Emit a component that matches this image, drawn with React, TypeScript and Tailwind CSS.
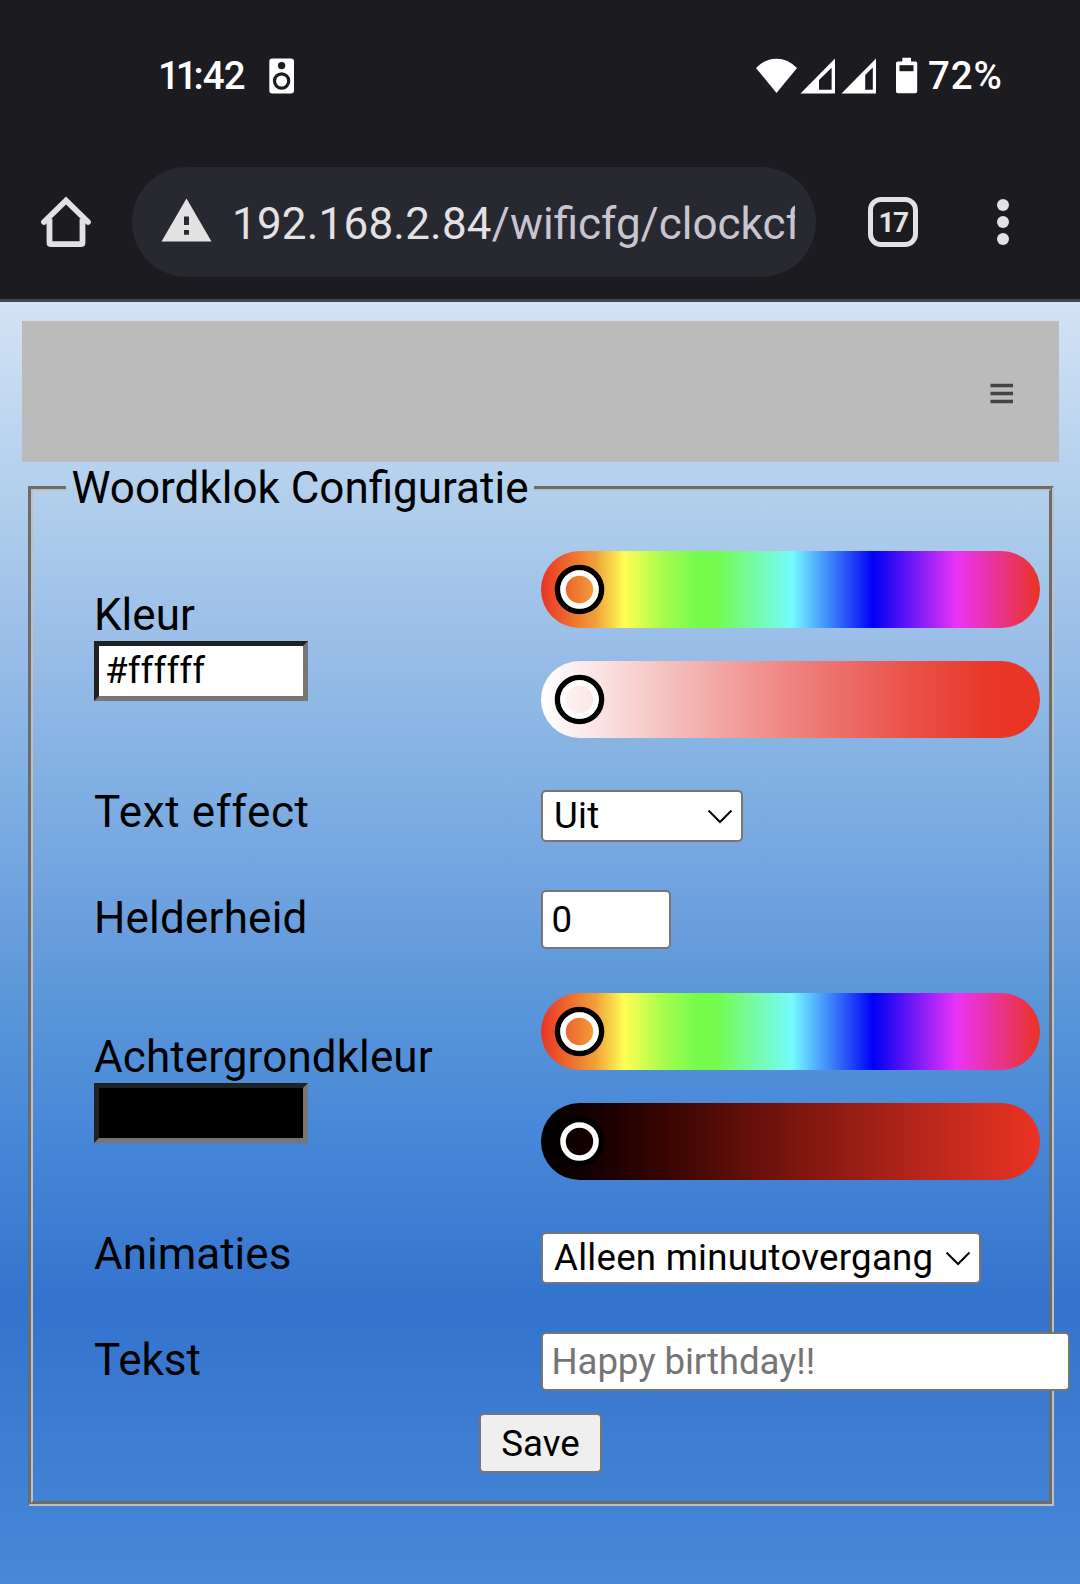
import React from "react";

const HUE =
  "bg-[linear-gradient(90deg,#ea3323_0%,#f0a13a_11%,#ffff54_16.7%,#a6fc4d_24.5%,#75fb4c_31.5%,#75fb4c_35%,#75fbfd_50.3%,#0000f5_66.6%,#ea33f7_83.3%,#ea3323_100%)]";
const WHITE_RED =
  "bg-[linear-gradient(90deg,#ffffff_0%,#f9e0df_13%,#f4bfbd_26%,#ee8480_50%,#ea5149_74%,#e93729_90%,#ea3323_100%)]";
const BLACK_RED =
  "bg-[linear-gradient(90deg,#000000_0%,#140000_10%,#380502_25%,#79150d_50%,#b4251a_75%,#ea3323_100%)]";

function StatusBar() {
  return (
    <div className="flex h-[150px] items-center pt-px text-white">
      <div className="ml-[158px] flex w-[90px] text-[38.5px] leading-[46px] font-medium">
        <span className="tracking-[-4.2px]">11</span>
        <span className="tracking-[-0.8px]">:42</span>
      </div>
      <svg className="ml-[21px]" width="26" height="36" viewBox="0 0 26 36">
        <rect x="0.3" y="0.5" width="24.7" height="35" rx="3" fill="#fff" />
        <circle cx="12.6" cy="7.6" r="3.7" fill="#1c1b1f" />
        <circle cx="12.6" cy="23" r="7.1" fill="none" stroke="#1c1b1f" strokeWidth="3.2" />
      </svg>
      <svg className="ml-[460px]" width="165" height="38" viewBox="755 56.5 165 38">
        <path d="M756 67.5Q765 58.2 776.5 58.2T797 67.5L776.5 92.5Z" fill="#fff" />
        <path d="M800.5 93L835 58V93Z" fill="#fff" />
        <path d="M819 79.5L831.6 67.200V89.2H819Z" fill="#1c1b1f" />
        <path d="M841.5 93L876 58V93Z" fill="#fff" />
        <path d="M865.2 74.5L872.8 67V89.2H865.2Z" fill="#1c1b1f" />
        <path
          d="M902.3 57.2H911V61H915.5Q917.2 61 917.2 62.7V91Q917.2 92.8 915.5 92.8H897.8Q896 92.8 896 91V62.7Q896 61 897.8 61H902.3Z"
          fill="#fff"
        />
        <rect x="899.5" y="64.7" width="14" height="6" fill="#1c1b1f" />
      </svg>
      <span className="ml-[8px] text-[38.5px] leading-[46px] font-medium tracking-[0.9px]">72%</span>
    </div>
  );
}

function AddressBar() {
  return (
    <div className="flex h-[149px] items-start pt-[17px]">
      <svg className="mt-[29px] ml-[40px]" width="52" height="53" viewBox="40 196 52 53" fill="none" stroke="#e3e2e2" strokeWidth="5.8">
        <path d="M44 222L66 200.500L88 222" strokeLinecap="round" />
        <path d="M49.5 219V242.5Q49.5 244.2 51.2 244.2H80.8Q82.5 244.2 82.5 242.5V219" />
      </svg>
      <div className="ml-[40px] flex h-[110px] w-[684px] items-center rounded-full bg-[#282830] pl-[29px]">
        <svg width="51" height="44" viewBox="0 0 51 44" className="mb-[4px]">
          <path d="M25.5 0.5L50.5 43.5H0.5Z" fill="#e3e2e2" />
          <path d="M23 18.5h5v8.5h-5zM23 32h5v4.700h-5z" fill="#282830" />
        </svg>
        <div className="ml-[20px] w-[563px] overflow-hidden pt-[3px] text-[44px] leading-[56px] whitespace-nowrap text-[#c8c5d0]">
          <span className="tracking-[0.2px] text-[#e4e1e6]">192.168.2.84</span>/wificfg/clockcfg
        </div>
      </div>
      <div className="mt-[30px] ml-[52px] flex size-[50px] items-center justify-center rounded-[13px] border-[5.5px] border-[#e3e2e2] pt-px text-[28px] leading-none font-bold tracking-[-1.5px] text-[#e3e2e2]">
        17
      </div>
      <div className="mt-[32px] ml-[79px] flex flex-col gap-[5.500px]">
        <i className="size-[11.500px] rounded-full bg-[#e3e2e2]" />
        <i className="size-[11.500px] rounded-full bg-[#e3e2e2]" />
        <i className="size-[11.500px] rounded-full bg-[#e3e2e2]" />
      </div>
    </div>
  );
}

function Slider({ fill }: { fill: string }) {
  return (
    <div className={`flex h-[77px] w-[499px] items-start rounded-full pt-[13px] pl-[13px] ${fill}`}>
      <svg width="51" height="51" viewBox="0 0 51 51" fill="none" strokeWidth="5.600">
        <circle cx="25.500" cy="25.500" r="22" stroke="#000" />
        <circle cx="25.500" cy="25.500" r="16.500" stroke="#fff" />
      </svg>
    </div>
  );
}

function Select({ value, width }: { value: string; width: string }) {
  return (
    <div className={`relative h-[52px] ${width}`}>
      <select className="block size-full appearance-none rounded-[5px] border-2 border-[#767676] bg-white pb-px pl-[11px] text-[36.670px] leading-[47px] tracking-[0.24px] text-black">
        <option>{value}</option>
      </select>
      <svg className="absolute top-[19px] right-[10px]" width="26" height="15" viewBox="0 0 26 15" fill="none" stroke="#000" strokeWidth="2">
        <path d="M1.500 1.500L13 13L24.500 1.500" />
      </svg>
    </div>
  );
}

function Row({ label, swatch, height, pad, tracking = "tracking-[0.1px]", children }: { label: string; swatch?: React.ReactNode; height: string; pad: string; tracking?: string; children: React.ReactNode }) {
  return (
    <div className={`flex items-start ${height}`}>
      <div className={`w-[447px] shrink-0 ${swatch ? "pt-[49px]" : "pt-[26px]"}`}>
        <div className={`h-[52px] leading-[52px] ${tracking}`}>{label}</div>
        {swatch}
      </div>
      <div className={`shrink-0 ${pad}`}>{children}</div>
    </div>
  );
}

const SWATCH =
  "block h-[60px] w-[214px] border-5 border-t-[#202122] border-r-[#767676] border-b-[#767676] border-l-[#202122] px-[6px] pb-px text-[36.670px] leading-[47px] tracking-[0.15px]";
const FIELD =
  "block h-[59px] rounded-[5px] border-2 border-[#767676] bg-white px-[8.500px] text-[36.670px] leading-[54px] tracking-[-0.1px] text-black placeholder:text-[#757575] placeholder:opacity-100";

export default function App() {
  return (
    <div className="flex h-[1584px] w-[1080px] flex-col overflow-hidden bg-[#1c1b1f] font-[Roboto,sans-serif]">
      <StatusBar />
      <AddressBar />
      <div className="h-[3px] bg-[#48474c]" />
      <main className="h-[1282px] bg-[linear-gradient(180deg,#d4e3f5_0px,#cfe0f4_25px,#b7d2ee_160px,#afceec_210px,#9cbfe8_330px,#84b2e3_460px,#6b9fde_616px,#5b97d9_690px,#4787d8_835px,#3473cd_1003px,#4888d8_1282px)] pt-[19px] text-[44px] text-black">
        <nav className="mr-[21px] ml-[22px] flex h-[141px] items-center justify-end bg-[#bbbbbb] pr-[45px]">
          <svg width="24" height="22" viewBox="0 0 24 22" className="mt-[4px]">
            <path d="M0.500 2.500H23M0.500 10.500H23M0.500 18.500H23" stroke="#444" strokeWidth="3.500" />
          </svg>
        </nav>
        <fieldset className="ml-[28px] h-[1044px] w-[1025.500px] min-w-0 border-5 border-[#c0c0c0] pt-[26px] pl-[33px] [border-style:groove]">
          <legend className="h-[52px] w-[468px] pl-[5.500px] leading-[52px] whitespace-nowrap">Woordklok Configuratie</legend>
          <div className="pl-[28px]">
            <Row
              label="Kleur"
              height="h-[220px]"
              pad="pt-[11px]"
              tracking="tracking-normal"
              swatch={<input className={`${SWATCH} bg-white text-black`} defaultValue="#ffffff" />}
            >
              <div className="flex flex-col gap-[33px]">
                <Slider fill={HUE} />
                <Slider fill={WHITE_RED} />
              </div>
            </Row>
            <Row label="Text effect" height="h-[106px]" pad="pt-[30px]" tracking="tracking-[0.62px]">
              <Select value="Uit" width="w-[202px]" />
            </Row>
            <Row label="Helderheid" height="h-[116px]" pad="pt-[24px]" tracking="tracking-[0.2px]">
              <input className={`${FIELD} w-[130px]`} defaultValue="0" />
            </Row>
            <Row
              label="Achtergrondkleur"
              height="h-[220px]"
              pad="pt-[11px]"
              swatch={<input className={`${SWATCH} bg-black text-black`} defaultValue="#000000" />}
            >
              <div className="flex flex-col gap-[33px]">
                <Slider fill={HUE} />
                <Slider fill={BLACK_RED} />
              </div>
            </Row>
            <Row label="Animaties" height="h-[106px]" pad="pt-[30px]" tracking="tracking-normal">
              <Select value="Alleen minuutovergang" width="w-[440px]" />
            </Row>
            <Row label="Tekst" height="h-[105px]" pad="pt-[24px]" tracking="tracking-normal">
              <input className={`${FIELD} w-[529px]`} placeholder="Happy birthday!!" />
            </Row>
          </div>
          <button className="ml-[413px] block h-[60px] w-[123px] rounded-[5px] border-2 border-[#767676] bg-[#efefef] pt-[2px] text-[36.670px] leading-[54px]">
            Save
          </button>
        </fieldset>
      </main>
    </div>
  );
}
